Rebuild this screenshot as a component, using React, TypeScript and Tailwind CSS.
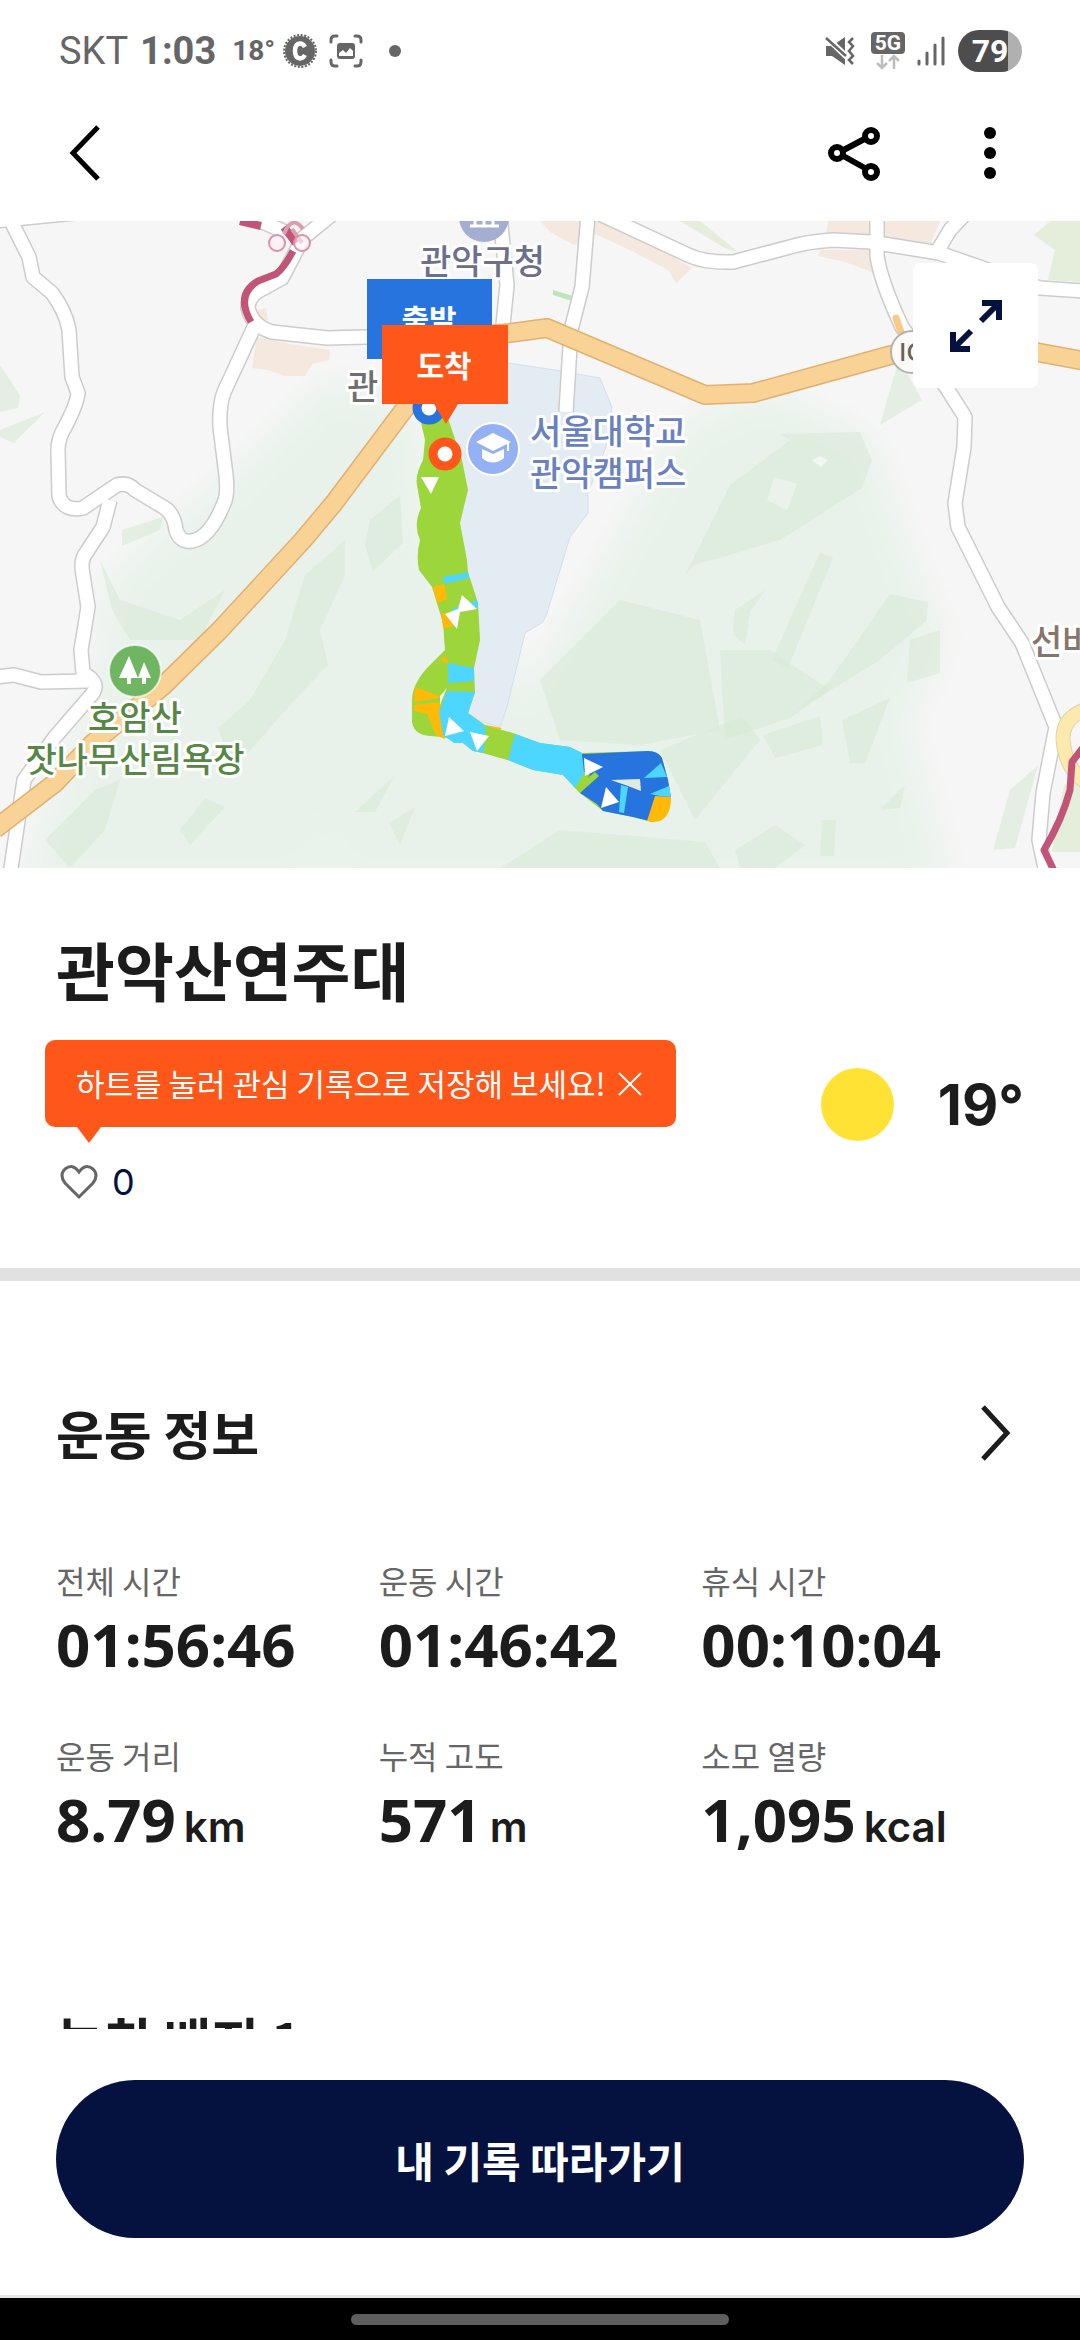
import { useState } from 'react';

interface Stat {
  label: string;
  value: string;
  unit?: string;
}

const stats: Stat[] = [
  { label: '전체 시간', value: '01:56:46' },
  { label: '운동 시간', value: '01:46:42' },
  { label: '휴식 시간', value: '00:10:04' },
  { label: '운동 거리', value: '8.79', unit: 'km' },
  { label: '누적 고도', value: '571', unit: 'm' },
  { label: '소모 열량', value: '1,095', unit: 'kcal' },
];

const roads = [
  'M-5 221L75 213',
  'M8 215L29 257L33 277L52 293Q66 312 69 330L72 377L78 393Q77 404 65 427Q58 438 58 450L59 496Q64 512 83 508L117 485Q128 482 135 490L165 508Q174 514 176 530Q180 543 192 541Q210 538 224 503Q228 495 226 475L220 427Q219 405 224 392L255 325',
  'M225 205L285 232',
  'M335 212L303 238L282 278L264 288Q248 295 248 308Q252 326 272 332L327 338L365 337L440 334',
  'M500 215L507 285L502 335',
  'M588 215L582 287L571 330L566 412',
  'M600 214L688 255Q705 263 733 262L790 247Q805 242 833 240L871 242L939 253L988 270L1040 288L1085 291',
  'M938 250L950 230L965 214',
  'M877 215L877 255Q880 280 902 327L946 387L965 417L964 447L955 503L958 527L998 607L1022 643L1056 727L1043 793L1039 840L1046 873',
  'M110 500L103 527L86 553Q80 560 83 575L88 607L81 650L83 673Q100 682 93 693L55 737L24 780L10 875',
  'M-5 677L14 675L41 682L88 681',
];

const orangeRoads = [
  'M-5 829L55 783L93 743L162 687L220 630L303 540L334 503L406 407L440 345Q446 338 510 333L547 328L705 395L753 393L891 355L940 345L1036 352L1085 361',
  'M896 318L902 335',
];

const lightGreens = [
  'M330 890L325 780L340 660L400 560L420 530L450 560L520 700L590 590L680 430L760 390L870 440L910 560L945 640L905 720L950 890Z',
  'M20 890L90 700L110 580L250 460L330 380L420 410L430 560L400 650L340 720L320 890Z',
];

const greens = [
  'M0 365L20 395L18 408L0 412Z',
  'M0 430L45 412L14 443L0 437Z',
  'M122 530L163 517L160 530L122 546Z',
  'M305 575L345 540L345 575L320 630L328 665L290 705L233 770L218 728L250 700L285 640Z',
  'M100 560L120 600L180 620L225 590L200 640L130 640L112 610Z',
  'M365 545L370 520L400 495L403 543L373 572Z',
  'M70 868L45 840L95 790L120 780L105 830L70 868Z',
  'M180 830L205 798L225 807L190 845Z',
  'M355 812L395 775L375 812Z',
  'M389 823L415 807L400 845Z',
  'M880 425L922 400L905 370L898 362Z',
  'M685 575L730 485L790 440L780 434L860 432L872 460L862 488L780 540L695 565Z',
  'M540 680L620 600L700 620L720 730L640 745L560 740Z',
  'M820 552L833 558L788 668L772 660Z',
  'M735 610L765 590L750 612L745 645L733 635Z',
  'M720 650L770 650L830 690L790 718L725 740Z',
  'M890 594L928 602L927 620L880 660L795 712L830 680Z',
  'M910 640L940 630L940 673L907 683Z',
  'M842 720L890 698L865 763L850 763Z',
  'M763 735L820 716L823 745L775 758Z',
  'M660 750L742 716L760 740L695 820Z',
  'M735 850L775 825L805 845L775 868L740 868Z',
  'M822 820L836 820L834 856L820 856Z',
  'M560 830L705 842L720 868L500 868Z',
  'M1010 790L1038 765L1015 848L993 850Z',
  'M880 810L905 785L900 808Z',
];

const forests = ['M680 221L700 221L738 252L725 248Z', 'M1050 221L1085 221L1085 282L1048 280L1055 250L1034 235Z', 'M1064 785L1085 775L1085 852L1052 852Z'];

const builtUp = [
  'M585 221L610 221L692 268L676 283L668 270L630 250L595 234L574 245L550 232L540 221Z',
  'M820 250L870 250L872 272L845 262L818 256Z',
  'M828 221L940 221L930 245L880 235L825 240Z',
  'M257 337L290 344L330 350L329 360L312 364L305 376L285 376L268 370L252 368Z',
  'M255 310L266 308L268 320L262 322Z',
];

const arrows = [
  'M421 477L439 477L431 494Z',
  'M462 595L477 609L460 612L457 629L445 614L458 609Z',
  'M449 717L464 731L445 736Z',
  'M470 732L489 736L477 751Z',
  'M584 758L603 767L585 776Z',
  'M606 787L619 802L601 808Z',
];

function RouteMap() {
  return (
    <svg
      viewBox="0 221 1080 647"
      preserveAspectRatio="xMidYMid slice"
      className="h-full w-full font-[Noto_Sans_CJK_KR,sans-serif] text-[34px] font-medium"
      role="img"
      aria-label="관악산 경로 지도"
    >
      <defs>
        <filter id="soft">
          <feGaussianBlur stdDeviation="18" />
        </filter>
      </defs>
      <rect y="221" width="1080" height="647" fill="#f6f6f6" />
      <g fill="#e8f2ea" filter="url(#soft)">
        {lightGreens.map((d) => <path key={d} d={d} />)}
      </g>
      <g fill="#d9e9d7" fillOpacity="0.6">
        {greens.map((d) => <path key={d} d={d} />)}
      </g>
      <g fill="#e4eedb">
        {forests.map((d) => <path key={d} d={d} />)}
      </g>
      <g fill="#f4e8df">
        {builtUp.map((d) => <path key={d} d={d} />)}
      </g>
      <path d="M553 290L573 296L572 301L553 295Z" fill="#bfe5bc" />
      <path d="M812 460L820 456L828 460L821 467Z" fill="#f4f6f4" />
      <path d="M774 477L797 484L787 510L767 500Z" fill="#eaf2eb" />
      <path
        d="M460 358L508 363L555 370L600 378L612 407L606 447L588 493L588 513L570 537L547 613L543 622L525 633L507 707L500 727L460 715L470 600L440 420Z"
        fill="#e3ebf3"
        stroke="#d5dff0"
      />

      <g fill="none" strokeLinejoin="round">
        <g stroke="#cccccc" strokeWidth="16">
          {roads.map((d) => <path key={d} d={d} />)}
        </g>
        <g stroke="#ffffff" strokeWidth="13">
          {roads.map((d) => <path key={d} d={d} />)}
        </g>
        <path d="M1090 708Q1062 716 1063 740Q1066 772 1090 785" stroke="#e3d4a4" strokeWidth="15" />
        <path d="M1090 708Q1062 716 1063 740Q1066 772 1090 785" stroke="#fce9ad" strokeWidth="13" />
        <path d={orangeRoads[0]} stroke="#e0b173" strokeWidth="20" />
        <path d={orangeRoads[0]} stroke="#f9d396" strokeWidth="17" />
        <path d={orangeRoads[1]} stroke="#f9c988" strokeWidth="7" strokeLinecap="round" />
        <path d="M293 251Q284 268 276 274L258 281Q235 295 251 322" stroke="#c25478" strokeWidth="7" />
        <path d="M240 221L261 226M284 227L296 243" stroke="#c25478" strokeWidth="8" />
        <path d="M284 234Q292 214 303 229M292 229L302 243" stroke="#dc9db1" strokeWidth="4" />
        <path d="M1085 745L1072 762L1070 790Q1062 820 1044 850L1055 873" stroke="#c25478" strokeWidth="7" />
      </g>
      <g fill="#fbf3f5" stroke="#dc8fa8" strokeWidth="2">
        <circle cx="277" cy="243" r="8" />
        <circle cx="302" cy="243" r="8" fillOpacity="0.6" />
      </g>

      <circle cx="912" cy="352" r="21" fill="#fbfaf8" stroke="#b5b0aa" strokeWidth="2" />
      <text x="899" y="361" fontSize="24" fill="#6a6056">IC</text>

      {/* Place markers */}
      <circle cx="484" cy="217" r="25" fill="#a3aed2" />
      <path d="M470 226H499M475 225V214M484 225V214M493 225V214" stroke="#fff" strokeWidth="3" />
      <circle cx="493" cy="449" r="26" fill="#94b1f3" stroke="#fff" strokeWidth="2" />
      <path d="M493 433L511 442L493 451L476 442Z" fill="#fff" />
      <path d="M482 449L493 454L504 449V458Q493 467 482 458Z" fill="#fff" />
      <path d="M508 442V451" stroke="#fff" strokeWidth="2" />
      <circle cx="135" cy="671" r="26" fill="#6fb562" stroke="#fff" strokeOpacity="0.7" strokeWidth="2" />
      <path d="M129 656L138 678H131V684H127V678H119Z" fill="#fff" />
      <path d="M144 662L151 678H146V684H142V678H138L141 670Z" fill="#fff" />

      <g stroke="#ffffff" strokeWidth="6" strokeLinejoin="round" paintOrder="stroke">
        <text x="420" y="274" fill="#6c708c">관악구청</text>
        <text x="347" y="399" fill="#6f6f6f">관</text>
        <text x="530" y="444" fill="#6a81bf">서울대학교</text>
        <text x="530" y="486" fill="#6a81bf">관악캠퍼스</text>
        <text x="135" y="730" textAnchor="middle" fill="#568746">호암산</text>
        <text x="135" y="772" textAnchor="middle" fill="#568746">잣나무산림욕장</text>
        <text x="1031" y="654" fill="#85766c">선바</text>
      </g>

      {/* Track, coloured by speed */}
      <path
        d="M420 418L425 440L423 460Q415 475 417 485L421 508Q413 525 420 540Q416 555 419 570L432 587L443 623L445 650L427 668Q412 685 412 700L412 722Q414 735 430 736L443 737L463 743L473 751L483 753L508 760L533 770L563 775L580 793L603 811L633 817L653 822Q668 818 671 798L668 780L662 758Q658 751 648 751L582 753L570 747L540 743L513 733L485 725L468 713L475 692L474 668L480 640L478 603L468 572L467 560L460 523L468 490L462 460L448 418Z"
        fill="#9cd63a"
      />
      <g fill="#ffba08">
        <path d="M433 587L444 584L447 599L437 603Z" />
        <path d="M441 612L453 618L452 627L443 628Z" />
        <path d="M443 656L447 659L448 664L441 660Z" />
        <path d="M415 687L437 695L440 698L414 702Z" />
        <path d="M414 705L440 702L441 714L445 739L436 735L427 714L414 711Z" />
        <path d="M485 725L502 728L498 731Z" />
      </g>
      <path d="M447 688L442 700L440 705L440 696Z" fill="#eef5ef" />
      <g fill="#4dd6ff">
        <path d="M443 577L468 572L469 578L444 584Z" />
        <path d="M452 609L477 600L478 608L455 613Z" />
        <path d="M448 663L474 668V681L448 683Z" />
        <path d="M447 691L475 692L468 713L485 726L486 740L483 753L473 751L463 743L454 743L443 735L439 712Z" />
        <path d="M515 734L540 743L570 747L582 753L586 770L575 788L563 775L533 770L508 760Z" />
      </g>
      <path d="M486 726L514 734L508 760L484 753Z" fill="#9cd63a" />
      <path
        d="M582 754L648 751Q658 751 662 758L668 780L671 798L653 822L633 817L603 811L597 804L580 793L590 774L584 772Z"
        fill="#2874de"
      />
      <path d="M575 788L595 772L599 776L580 793Z" fill="#9cd63a" />
      <g fill="#4dd6ff">
        <path d="M644 778L661 763L667 777Z" />
        <path d="M650 794L669 786L671 797L660 796Z" />
        <path d="M621 785L628 787L624 813L619 812Z" />
      </g>
      <path d="M655 796L671 797Q671 822 653 822L647 821Z" fill="#ffba08" />
      <path d="M611 780L640 779L641 791L628 786Z" fill="#e0ebdf" />
      <g fill="#ffffff">
        {arrows.map((d) => <path key={d} d={d} />)}
      </g>

      {/* Start and finish flags */}
      <circle cx="429" cy="408" r="12" fill="#fff" stroke="#2874de" strokeWidth="9" />
      <circle cx="445" cy="454" r="12" fill="#fff" stroke="#ff571a" strokeWidth="9" />
      <g textAnchor="middle" fontSize="30" fontWeight="700">
        <rect x="367" y="279" width="125" height="80" fill="#2874de" />
        <text x="429" y="331" fill="#ffffff">출발</text>
        <path d="M382 325H508V404H458L446 424L434 404H382Z" fill="#ff571a" />
        <text x="444" y="377" fill="#ffffff">도착</text>
      </g>
    </svg>
  );
}

function StatusBar() {
  return (
    <div className="flex items-center justify-between pt-[30px] pr-[58px] pb-3 pl-[59px] font-[Roboto,sans-serif] text-[#666666]">
      <div className="flex h-[42px] items-center">
        <span className="text-[38px]">SKT</span>
        <span className="ml-3 text-[38px] font-bold">1:03</span>
        <span className="ml-4 text-[28px] font-bold">18°</span>
        <svg viewBox="0 0 34 34" className="ml-2 size-[34px]">
          <circle cx="17" cy="17" r="15" fill="currentColor" />
          <circle cx="17" cy="17" r="16" fill="none" stroke="currentColor" strokeWidth="2" strokeDasharray="2 1.6" />
          <path d="M22 13Q20 9.500 17 9.500Q12 10 12 17Q12 24 17 24.500Q20 24.500 22 21" fill="none" stroke="#fff" strokeWidth="4.500" />
        </svg>
        <svg viewBox="0 0 34 34" className="ml-3 size-[34px]" fill="none" stroke="currentColor" strokeWidth="3" strokeLinecap="round">
          <path d="M2 8V6Q2 2 6 2H8M26 2H28Q32 2 32 6V8M32 26V28Q32 32 28 32H26M8 32H6Q2 32 2 28V26" />
          <rect x="8" y="9" width="18" height="16" rx="3" fill="currentColor" stroke="none" />
          <path d="M10 22V19L14 16L17 19L21 14L24 17V22Z" fill="#fff" stroke="none" />
        </svg>
        <span className="ml-[26px] size-3 rounded-full bg-[#666666]" />
      </div>
      <div className="flex h-[42px] items-center">
        <svg viewBox="0 0 30 30" className="size-[30px]">
          <path d="M1 10H7L20 1V29L7 20H1Z" fill="currentColor" />
          <path d="M0 0L23 22" stroke="#fff" strokeWidth="6" />
          <path d="M1 2L21 20" stroke="currentColor" strokeWidth="2.500" />
          <path d="M28 2L24 6L28 10L24 15L28 20L24 24L28 28" fill="none" stroke="currentColor" strokeWidth="2.500" />
        </svg>
        <div className="ml-4 flex flex-col items-center">
          <span className="flex h-[22px] w-[34px] items-center justify-center rounded bg-[#666666] text-[21px] leading-none font-bold text-white">5G</span>
          <svg viewBox="0 0 24 16" className="h-4 w-6" fill="none" stroke="#bdbdbd" strokeWidth="2.500">
            <path d="M6 1V13M1 9L6 14L11 9M18 15V3M13 7L18 2L23 7" />
          </svg>
        </div>
        <svg viewBox="0 0 28 30" className="ml-3 h-[30px] w-7" stroke="currentColor" strokeWidth="3" strokeLinecap="round">
          <path d="M2 25V28M10 17V28M18 9V28M26 2V28" />
        </svg>
        <span className="ml-[13px] flex h-[42px] w-16 items-center justify-center rounded-full bg-linear-to-r from-[#4d4d4d] from-78% to-[#b0b0b0] to-78% text-[32px] font-bold text-white">
          79
        </span>
      </div>
    </div>
  );
}

export default function App() {
  const [showTip, setShowTip] = useState(true);
  const [liked, setLiked] = useState(false);

  return (
    <div className="flex h-screen flex-col bg-white font-[Noto_Sans_CJK_KR,sans-serif] text-[#1c1c1c]">
      <header>
        <StatusBar />
        <div className="flex h-[137px] items-center justify-between pr-[62px] pl-[58px]">
          <button aria-label="뒤로" className="flex size-14 items-center justify-center">
            <svg viewBox="0 0 56 56" className="size-14" fill="none" stroke="#000" strokeWidth="5">
              <path d="M40 2L15 28L40 54" />
            </svg>
          </button>
          <div className="flex items-center gap-20">
            <button aria-label="공유" className="size-14">
              <svg viewBox="0 0 56 56" className="size-14" fill="none" stroke="#000" strokeWidth="6">
                <path d="M12 28L46 10M12 28L46 47" />
                <circle cx="11" cy="28" r="6" fill="#fff" />
                <circle cx="45" cy="11" r="6" fill="#fff" />
                <circle cx="45" cy="47" r="6" fill="#fff" />
              </svg>
            </button>
            <button aria-label="더보기" className="size-14">
              <svg viewBox="0 0 56 56" className="size-14">
                <circle cx="28" cy="8" r="6" />
                <circle cx="28" cy="28" r="6" />
                <circle cx="28" cy="48" r="6" />
              </svg>
            </button>
          </div>
        </div>
      </header>

      <main className="min-h-0 flex-1 overflow-hidden">
        <div className="relative h-[647px]">
          <RouteMap />
          <button
            aria-label="지도 확대"
            className="absolute top-[42px] right-[42px] flex size-[125px] items-center justify-center rounded-lg bg-white"
          >
            <svg viewBox="0 0 52 52" className="size-[52px]" fill="none" stroke="#05113f" strokeWidth="6">
              <path d="M32 3H49V20M49 3L31 21M3 32V49H20M3 49L21 31" />
            </svg>
          </button>
        </div>

        <section className="px-14 pt-[60px] pb-[67px]">
          <h1 className="text-[64px] leading-[80px] font-bold">관악산연주대</h1>
          <div className="mt-8 flex items-start justify-between">
            <div>
              {showTip && (
                <div className="relative -ml-[11px] flex h-[87px] items-center gap-3 rounded-[10px] bg-[#ff571a] pr-[34px] pl-[31px] text-[31px] text-white">
                  하트를 눌러 관심 기록으로 저장해 보세요!
                  <button aria-label="닫기" onClick={() => setShowTip(false)}>
                    <svg viewBox="0 0 24 24" className="size-6" stroke="#fff" strokeWidth="2">
                      <path d="M1 1L23 23M23 1L1 23" />
                    </svg>
                  </button>
                  <svg viewBox="0 0 24 16" className="absolute top-full left-8 h-4 w-6">
                    <path d="M0 0H24L12 16Z" fill="#ff571a" />
                  </svg>
                </div>
              )}
              <button
                aria-label="관심 기록"
                onClick={() => setLiked(!liked)}
                className="mt-9 flex h-[38px] items-center gap-3.5 pl-1 font-[Inter,sans-serif] text-[36px] leading-[38px] text-[#05113f]"
              >
                <svg viewBox="0 0 38 36" className="h-9 w-[38px]" fill={liked ? '#ff571a' : 'none'} stroke="#666" strokeWidth="3">
                  <path d="M19 33L5 19Q-1 11 5 5Q13 -1 19 8Q25 -1 33 5Q39 11 33 19Z" />
                </svg>
                {liked ? 1 : 0}
              </button>
            </div>
            <div className="flex items-center gap-11 pt-7">
              <span className="size-[73px] rounded-full bg-[#ffe234]" />
              <span className="font-[Inter,sans-serif] text-[56px] leading-[72px] font-bold">19°</span>
            </div>
          </div>
        </section>

        <div className="h-[13px] bg-[#e1e1e1]" />

        <section className="px-14 pt-[122px]">
          <div className="flex items-center justify-between">
            <h2 className="text-[52px] leading-[60px] font-bold">운동 정보</h2>
            <button aria-label="운동 정보 상세" className="pr-2">
              <svg viewBox="0 0 44 56" className="h-14 w-11" fill="none" stroke="#1c1c1c" strokeWidth="5">
                <path d="M11 2L35 28L11 54" />
              </svg>
            </button>
          </div>
          <dl className="mt-[97px] grid grid-cols-3 gap-y-[59px]">
            {stats.map((stat) => (
              <div key={stat.label}>
                <dt className="text-[32px] leading-10 text-[#666666]">{stat.label}</dt>
                <dd className="mt-3 font-[Noto_Sans,sans-serif] text-[60px] leading-[64px] font-bold whitespace-nowrap">
                  {stat.value}
                  {stat.unit && (
                    <span className="ml-2 font-[Inter,sans-serif] text-[42px] leading-none font-semibold">{stat.unit}</span>
                  )}
                </dd>
              </div>
            ))}
          </dl>
        </section>

        <section className="px-14 pt-[159px]">
          <h2 className="text-[52px] leading-[60px] font-bold">놓친 배지 1</h2>
        </section>
      </main>

      <footer className="border-b-3 border-[#e6e6e6] px-14 pt-[51px] pb-[57px]">
        <button className="h-[158px] w-full rounded-full bg-[#05113f] text-[42px] font-bold text-white">
          내 기록 따라가기
        </button>
      </footer>
      <div className="flex h-[42px] items-center justify-center bg-black">
        <span className="h-[11px] w-[35%] rounded-full bg-[#5e5e5e]" />
      </div>
    </div>
  );
}
